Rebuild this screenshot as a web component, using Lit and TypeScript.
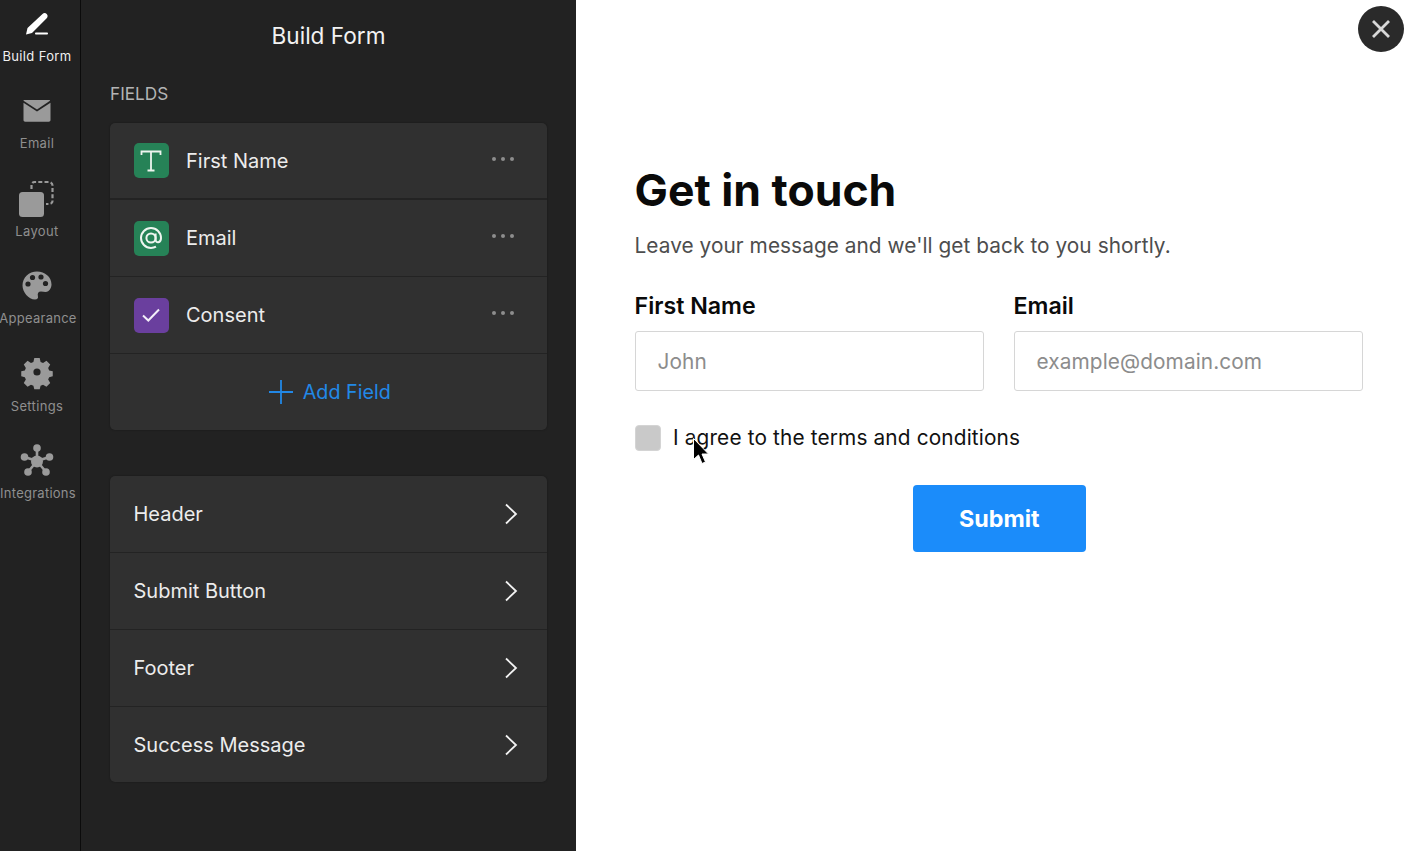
import { LitElement, html, css, svg } from "lit";
import { customElement } from "lit/decorators.js";

const navIcons: Record<string, unknown> = {
  pen: svg`<svg width="30" height="30" viewBox="0 0 30 30"><path d="M4 25.500 5.500 19 20.500 5c1.300-1.200 3-1.200 4.200 0 1.200 1.200 1.200 3 0 4.200L10 24z" fill="#fff"/><rect x="13" y="23.600" width="13" height="1.800" rx=".9" fill="#fff"/></svg>`,
  mail: svg`<svg width="30" height="30" viewBox="0 0 30 30"><path d="M2 4h25.500a.8.8 0 0 1 .5.400v.4L15 13.500 1.500 4.800v-.4a.8.8 0 0 1 .5-.4z" fill="#9a9a9a"/><path d="M1.500 6.700 15 15.500l13.500-8.800v17.300c0 1-.7 1.700-1.700 1.700H3.200c-1 0-1.700-.7-1.700-1.700z" fill="#9a9a9a"/></svg>`,
  layout: svg`<svg width="38" height="38" viewBox="0 0 38 38"><rect x="1" y="12" width="25" height="25" rx="3.500" fill="#9a9a9a"/><path d="M13.500 9V5a3 3 0 0 1 3-3h14.500a3.500 3.500 0 0 1 3.500 3.500V21a3 3 0 0 1-3 3h-3.500" fill="none" stroke="#9a9a9a" stroke-width="2.200" stroke-dasharray="4 2.200"/></svg>`,
  palette: svg`<svg width="30" height="30" viewBox="0 0 30 30"><path d="M15 .5C7 .5.500 6.600.500 14.500c0 6.500 6 14 12.500 14 2.500 0 3.400-1.500 2.900-3.500-.6-2.500.4-4.500 3.100-4.500 3 0 5 1.300 7.500-.5 2.300-1.800 3-4.500 3-6.500C29.500 6 23 .5 15 .5z" fill="#9a9a9a"/><circle cx="10.500" cy="6.500" r="2.600" fill="#222"/><circle cx="19" cy="6" r="2.600" fill="#222"/><circle cx="6" cy="13" r="2.600" fill="#222"/><circle cx="23.500" cy="12.500" r="2.600" fill="#222"/></svg>`,
  gear: svg`<svg width="32" height="32" viewBox="0 0 32 32"><path fill-rule="evenodd" fill="#9a9a9a" d="M13 .5h6l1 4.300 2.700 1.100 3.800-2.300 4.200 4.200-2.300 3.800 1.100 2.700 4 1v5.400l-4 1-1.100 2.700 2.300 3.800-4.200 4.200-3.800-2.300-2.700 1.100-1 4h-6l-1-4-2.700-1.100-3.800 2.300-4.200-4.200 2.300-3.800-1.100-2.700-4-1v-5.400l4-1 1.100-2.700-2.300-3.800 4.200-4.200 3.800 2.300 2.700-1.100zM16 12a4 4 0 1 0 0 8 4 4 0 0 0 0-8z" transform="translate(1.600 -.4) scale(.9)"/></svg>`,
  nodes: svg`<svg width="34" height="34" viewBox="0 0 34 34" fill="#9a9a9a"><circle cx="17" cy="4" r="3.800"/><circle cx="4.500" cy="13" r="3.800"/><circle cx="29.500" cy="13" r="3.800"/><circle cx="8" cy="28" r="3.800"/><circle cx="26" cy="28" r="3.800"/><path d="M17 4 17 17 4.500 13 17 17 29.500 13 17 17 26 28 17 17 8 28 17 17" stroke="#9a9a9a" stroke-width="2.600"/><circle cx="17" cy="17.500" r="6"/></svg>`,
};

const chev = svg`<svg width="14" height="24" viewBox="0 0 14 24"><path d="M2 2.500 12 12 2 21.500" fill="none" stroke="#f2f2f2" stroke-width="1.800"/></svg>`;

@customElement("app-root")
export class AppRoot extends LitElement {
  static styles = css`
    :host { display: block; position: relative; width: 1407px; height: 851px; overflow: hidden; font-family: Inter, "Liberation Sans", sans-serif; background: #fff; }
    .page { display: flex; height: 851px; }
    .nav { width: 80px; background: #222222; border-right: 1px solid #0b0b0b; flex: none; display: flex; flex-direction: column; padding-top: 7px; }
    .nav-item { height: 87.4px; width: 74px; display: flex; flex-direction: column; align-items: center; color: #8f8f8f; font-size: 13px; letter-spacing: .35px; white-space: nowrap; flex: none; }
    .nav-item.active { color: #f0f0f0; }
    .nav-icon { height: 41px; box-sizing: border-box; padding-bottom: 7px; display: flex; align-items: center; justify-content: center; }
    .nav-label { line-height: 16px; height: 16px; }
    .nav-label.wide { margin-left: 2px; letter-spacing: .25px; }
    .panel { width: 495px; flex: none; background: #222222; box-sizing: border-box; padding: 0 29px; color: #f0f0f0; }
    .panel h2 { margin: 0; font-weight: 400; font-size: 22.600px; line-height: 71px; text-align: center; color: #f2f2f2; }
    .fields-label { font-size: 17.200px; color: #b4b4b4; line-height: 20px; margin-top: 13px; margin-bottom: 19px; }
    .card { background: #303030; border-radius: 5px; box-shadow: 0 0 2px rgba(0,0,0,.35); overflow: hidden; width: 437px; }
    .card + .card { margin-top: 46px; }
    .row { display: flex; align-items: center; height: 76px; padding: 0 23.500px; gap: 17.500px; font-size: 20px; color: #ececec; border-bottom: 1px solid #232323; }
    .row.first { height: 75px; border-bottom-width: 2px; }
    .row.last { border-bottom: none; }
    .row.short { height: 75px; }
    .row .name { flex: 1; }
    .badge { width: 35px; height: 35px; border-radius: 5px; display: flex; align-items: center; justify-content: center; flex: none; }
    .green { background: #268257; }
    .purple { background: #6a3f9e; }
    .dots { display: flex; gap: 5px; margin-right: 9.500px; margin-top: -4px; }
    .dots i { width: 4px; height: 4px; border-radius: 50%; background: #8d8d8d; display: block; }
    .add { justify-content: center; color: #2288e6; gap: 10px; font-size: 19.700px; padding-left: 26px; }
    .chev { display: flex; margin-right: 6px; }
    .main { flex: 1; background: #fff; padding: 163px 43px 0 58.500px; box-sizing: border-box; color: #000; }
    .main h1 { margin: 0; font-size: 44.500px; line-height: 54px; font-weight: 700; color: #0a0a0a; }
    .sub { font-size: 20.800px; line-height: 28px; letter-spacing: .06px; color: #4d4d4d; margin-top: 15px; }
    .cols { display: grid; grid-template-columns: 349.500px 349.500px; gap: 29.500px; margin-top: 31px; }
    .cols label { display: block; font-size: 23.200px; font-weight: 600; line-height: 30px; margin-bottom: 10px; color: #0a0a0a; }
    .input { height: 60px; box-sizing: border-box; border: 1px solid #d6d6d6; border-radius: 3px; padding-left: 22px; display: flex; align-items: center; font-size: 20.800px; letter-spacing: .1px; color: #8c8c8c; }
    .consent { display: flex; align-items: center; gap: 12.500px; margin-top: 33px; font-size: 20.800px; letter-spacing: .15px; color: #111; line-height: 28px; }
    .box { width: 26px; height: 26px; background: #c9c9c9; border: 1px solid #d4d4d4; box-sizing: border-box; border-radius: 4px; }
    .submit-wrap { display: flex; justify-content: center; margin-top: 33px; }
    .submit { width: 173px; height: 67px; border-radius: 4px; background: #1b8cfa; color: #fff; font-weight: 700; font-size: 23.300px; display: flex; align-items: center; justify-content: center; }
    .close { position: absolute; left: 1358px; top: 6px; width: 46px; height: 46px; border-radius: 50%; background: #2a2a2a; display: flex; align-items: center; justify-content: center; }
    .cursor { position: absolute; left: 692px; top: 437px; }
  `;

  private navItem(icon: string, label: string, active = false, wide = false) {
    return html`<div class="nav-item ${active ? "active" : ""}"><div class="nav-icon">${navIcons[icon]}</div><div class="nav-label ${wide ? "wide" : ""}">${label}</div></div>`;
  }

  private dots() {
    return html`<div class="dots"><i></i><i></i><i></i></div>`;
  }

  private sectionRow(label: string, cls = "") {
    return html`<div class="row ${cls}"><span class="name">${label}</span><span class="chev">${chev}</span></div>`;
  }

  render() {
    return html`
      <div class="page">
        <nav class="nav">
          ${this.navItem("pen", "Build Form", true)}
          ${this.navItem("mail", "Email")}
          ${this.navItem("layout", "Layout")}
          ${this.navItem("palette", "Appearance", false, true)}
          ${this.navItem("gear", "Settings")}
          ${this.navItem("nodes", "Integrations", false, true)}
        </nav>
        <section class="panel">
          <h2>Build Form</h2>
          <div class="fields-label">FIELDS</div>
          <div class="card">
            <div class="row first">
              <span class="badge green"><svg width="28" height="28" viewBox="0 0 28 28"><path d="M4.500 8V4.500h19V8M14 4.500v19M10.500 23.500h7" fill="none" stroke="#eef5f0" stroke-width="1.800"/></svg></span>
              <span class="name">First Name</span>${this.dots()}
            </div>
            <div class="row">
              <span class="badge green"><svg width="28" height="28" viewBox="0 0 28 28"><circle cx="14" cy="14" r="4.600" fill="none" stroke="#eef5f0" stroke-width="2"/><path d="M18.600 9.500v6.300c0 3.500 5.400 3.500 5.400-1.800C24 8.500 19.500 4 14 4S4 8.500 4 14s4.500 10 10 10c2 0 3.500-.4 5-1.300" fill="none" stroke="#eef5f0" stroke-width="2"/></svg></span>
              <span class="name">Email</span>${this.dots()}
            </div>
            <div class="row">
              <span class="badge purple"><svg width="24" height="24" viewBox="0 0 24 24"><path d="M4 12.500l5.300 5L20 6.500" fill="none" stroke="#f2eef8" stroke-width="2"/></svg></span>
              <span class="name">Consent</span>${this.dots()}
            </div>
            <div class="row add last">
              <svg width="24" height="24" viewBox="0 0 24 24"><path d="M12 0v24M0 12h24" stroke="#2288e6" stroke-width="1.800" fill="none"/></svg>
              <span>Add Field</span>
            </div>
          </div>
          <div class="card">
            ${this.sectionRow("Header")}
            ${this.sectionRow("Submit Button")}
            ${this.sectionRow("Footer")}
            ${this.sectionRow("Success Message", "last short")}
          </div>
        </section>
        <main class="main">
          <h1>Get in touch</h1>
          <div class="sub">Leave your message and we'll get back to you shortly.</div>
          <div class="cols">
            <div><label>First Name</label><div class="input">John</div></div>
            <div><label>Email</label><div class="input">example@domain.com</div></div>
          </div>
          <div class="consent"><span class="box"></span><span>I agree to the terms and conditions</span></div>
          <div class="submit-wrap"><div class="submit">Submit</div></div>
        </main>
      </div>
      <div class="close"><svg width="24" height="24" viewBox="0 0 24 24"><path d="M4 4l16 16M20 4 4 20" stroke="#d8d8d8" stroke-width="2.800" fill="none"/></svg></div>
      <svg class="cursor" width="18" height="30" viewBox="0 0 18 30"><path d="M1.500 1.500v21l5-4.500 3.500 8.500 3.500-1.500-3.500-8h6.500z" fill="#000" stroke="#fff" stroke-width="1"/></svg>
    `;
  }
}
